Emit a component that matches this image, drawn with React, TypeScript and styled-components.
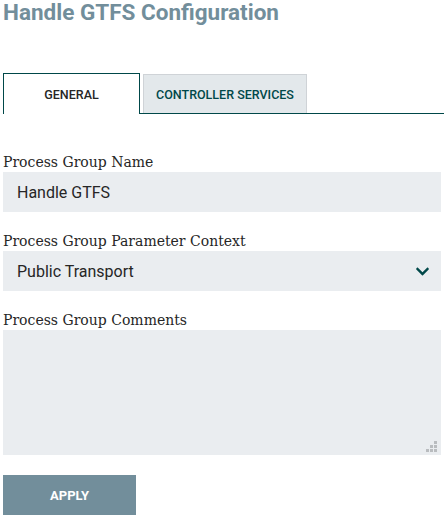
import React from "react";
import styled, { createGlobalStyle } from "styled-components";
import { FaChevronDown } from "react-icons/fa";

const GlobalStyle = createGlobalStyle`
  html, body {
    margin: 0;
    padding: 0;
    background: #ffffff;
  }
  * {
    box-sizing: border-box;
  }
`;

const Page = styled.div`
  width: 444px;
  padding: 0 3px;
  display: flex;
  flex-direction: column;
`;

const Title = styled.h1`
  margin: 0;
  font-family: Roboto, "Liberation Sans", sans-serif;
  font-weight: 700;
  font-size: 22.5px;
  line-height: 24px;
  color: #728e9b;
  white-space: nowrap;
`;

const TabBar = styled.div`
  display: flex;
  align-items: flex-end;
  gap: 3px;
  margin-top: 49px;
  margin-right: -3px;
  border-bottom: 1px solid #004849;
`;

const Tab = styled.div<{ active?: boolean }>`
  display: flex;
  align-items: center;
  justify-content: center;
  width: ${(p) => (p.active ? "137px" : "164px")};
  white-space: nowrap;
  font-family: Roboto, "Liberation Sans", sans-serif;
  font-size: 12.5px;
  font-weight: 500;
  color: ${(p) => (p.active ? "#262626" : "#004849")};
  background: ${(p) => (p.active ? "#ffffff" : "#e3e8eb")};
  border: 1px solid ${(p) => (p.active ? "#004849" : "#cfd3d7")};
  border-bottom: none;
  margin-bottom: ${(p) => (p.active ? "-1px" : "0")};
  height: ${(p) => (p.active ? "41px" : "39px")};
`;

const Form = styled.div`
  display: flex;
  flex-direction: column;
  margin-top: 39px;
`;

const Field = styled.div`
  display: flex;
  flex-direction: column;
  margin-bottom: 20px;
`;

const Label = styled.div`
  font-family: "DejaVu Serif", "Liberation Serif", serif;
  font-size: 14px;
  line-height: 19px;
  color: #262626;
`;

const Input = styled.div`
  height: 40px;
  background: #eaedf0;
  display: flex;
  align-items: center;
  padding: 0 14px;
  font-family: Roboto, "Liberation Sans", sans-serif;
  font-size: 16px;
  color: #262626;
`;

const Select = styled(Input)`
  justify-content: space-between;
  padding-right: 11px;
  svg {
    color: #004849;
  }
`;

const TextArea = styled.div`
  position: relative;
  height: 125px;
  background: #eaedf0;
`;

const Grip = styled.svg`
  position: absolute;
  right: 4px;
  bottom: 3px;
`;

const ApplyButton = styled.button`
  width: 133px;
  height: 40px;
  border: none;
  padding: 0;
  background: #728e9b;
  color: #ffffff;
  font-family: Roboto, "Liberation Sans", sans-serif;
  font-size: 13px;
  font-weight: 700;
  cursor: pointer;
`;

const gripDots: [number, number][] = [
  [8, 0],
  [4, 4],
  [8, 4],
  [0, 8],
  [4, 8],
  [8, 8],
];

export default function App() {
  return (
    <>
      <GlobalStyle />
      <Page>
        <Title>Handle GTFS Configuration</Title>
        <TabBar>
          <Tab active>GENERAL</Tab>
          <Tab>CONTROLLER SERVICES</Tab>
        </TabBar>
        <Form>
          <Field>
            <Label>Process Group Name</Label>
            <Input>Handle GTFS</Input>
          </Field>
          <Field>
            <Label>Process Group Parameter Context</Label>
            <Select>
              Public Transport
              <FaChevronDown size={15} />
            </Select>
          </Field>
          <Field>
            <Label>Process Group Comments</Label>
            <TextArea>
              <Grip width="11" height="11" viewBox="0 0 11 11">
                {gripDots.map(([x, y]) => (
                  <rect key={`${x}-${y}`} x={x} y={y} width="3" height="3" fill="#b9bcbf" />
                ))}
              </Grip>
            </TextArea>
          </Field>
          <ApplyButton>APPLY</ApplyButton>
        </Form>
      </Page>
    </>
  );
}
